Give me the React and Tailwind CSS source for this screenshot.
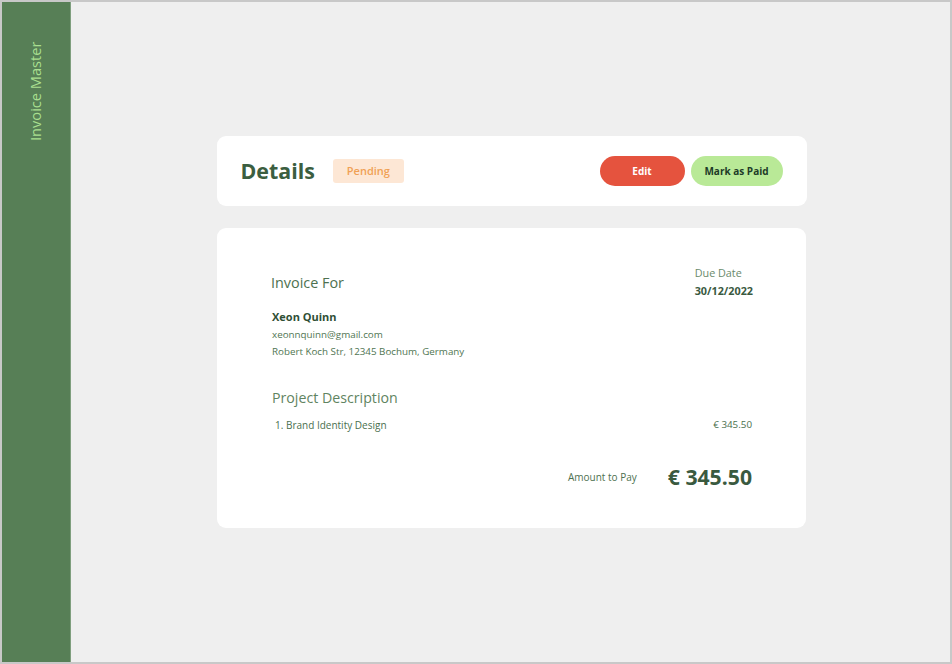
export default function App() {
  return (
    <div
      className="w-[952px] h-[664px] border-2 border-[#c8c8c8] flex bg-[#efefef] overflow-hidden"
      style={{ fontFamily: '"Open Sans", "Noto Sans", sans-serif' }}
    >
      <aside className="w-[69px] h-full bg-[#577f56] border-r border-[#7f9f7e] shrink-0 flex justify-center pt-[38px]">
        <div className="h-[102px] flex items-center justify-center">
          <span className="block -rotate-90 whitespace-nowrap text-[14.6px] text-[#a9df8f] leading-none">
            Invoice Master
          </span>
        </div>
      </aside>
      <main className="flex-1 flex flex-col items-center justify-center gap-[22px] pl-[2px]">
        <section className="w-[590px] h-[70px] bg-white rounded-[9px] flex items-center pl-[24px] pr-[24px]">
          <h1 className="text-[21.4px] font-bold text-[#3b5e40] leading-none">Details</h1>
          <span className="ml-[18px] w-[71px] h-[24px] bg-[#fde7d5] rounded-[3px] text-[#f0a155] text-[11px] font-semibold flex items-center justify-center">
            Pending
          </span>
          <div className="ml-auto flex gap-[6px]">
            <button className="w-[85px] h-[30px] rounded-full bg-[#e5533e] text-white text-[10px] font-bold">
              Edit
            </button>
            <button className="w-[92px] h-[30px] rounded-full bg-[#b9e997] text-[#1e3b28] text-[10px] font-bold">
              Mark as Paid
            </button>
          </div>
        </section>
        <section className="w-[589px] h-[300px] bg-white rounded-[9px] pl-[54px] pr-[54px] pt-[38px]">
          <div className="flex justify-between">
            <div>
              <h2 className="text-[14.4px] text-[#4d714f] mt-[7px] leading-[20px]">Invoice For</h2>
              <p className="text-[11px] font-bold text-[#2f4f35] mt-[17px] leading-[14px] pl-[1px]">Xeon Quinn</p>
              <p className="text-[9.8px] text-[#4f7552] mt-[4px] leading-[14px] pl-[1px]">xeonnquinn@gmail.com</p>
              <p className="text-[9.8px] text-[#4f7552] mt-[3px] leading-[14px] pl-[1px]">Robert Koch Str, 12345 Bochum, Germany</p>
            </div>
            <div className="text-left mr-[-1px]">
              <p className="text-[10.8px] text-[#6a8a6c] leading-[14px]">Due Date</p>
              <p className="text-[10.8px] font-bold text-[#3a5a3f] mt-[4px] leading-[14px]">30/12/2022</p>
            </div>
          </div>
          <h3 className="text-[14.2px] text-[#5f8461] mt-[29px] leading-[20px] pl-[1px]">Project Description</h3>
          <div className="flex justify-between mt-[10px] pl-[4px]">
            <span className="text-[10px] text-[#4a704e] leading-[14px]">1. Brand Identity Design</span>
            <span className="text-[9.8px] text-[#4a704e] leading-[14px]">€ 345.50</span>
          </div>
          <div className="flex justify-end items-center mt-[31px]">
            <span className="text-[10px] text-[#4d714f] leading-[14px]">Amount to Pay</span>
            <span className="ml-[31px] text-[21.2px] font-bold text-[#3a5a3f] leading-[28px]">€ 345.50</span>
          </div>
        </section>
      </main>
    </div>
  );
}
